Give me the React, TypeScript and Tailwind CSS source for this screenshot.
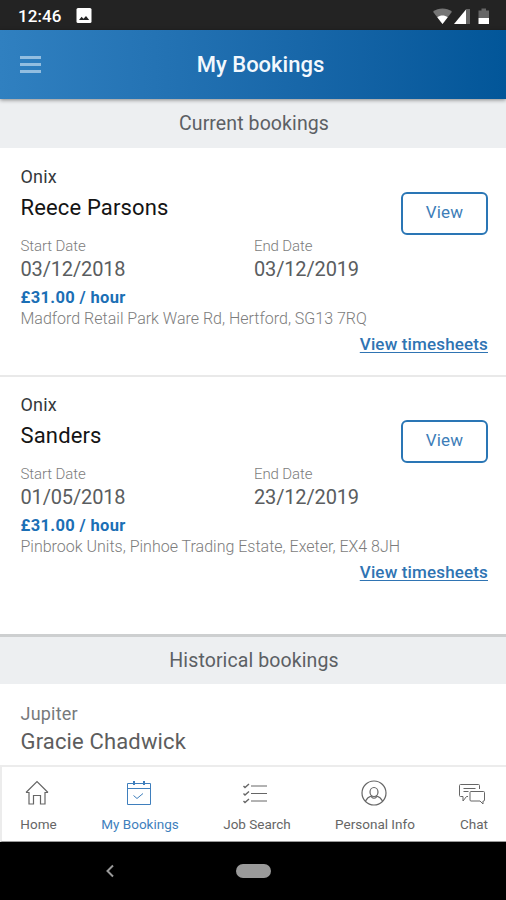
import type { ReactNode } from 'react';
import clsx from 'clsx';

interface Booking {
  client: string;
  name: string;
  startDate: string;
  endDate: string;
  rate: string;
  address: string;
}

const bookings: Booking[] = [
  {
    client: 'Onix',
    name: 'Reece Parsons',
    startDate: '03/12/2018',
    endDate: '03/12/2019',
    rate: '£31.00 / hour',
    address: 'Madford Retail Park Ware Rd, Hertford, SG13 7RQ',
  },
  {
    client: 'Onix',
    name: 'Sanders',
    startDate: '01/05/2018',
    endDate: '23/12/2019',
    rate: '£31.00 / hour',
    address: 'Pinbrook Units, Pinhoe Trading Estate, Exeter, EX4 8JH',
  },
];

const StatusBar = () => (
  <div className="flex h-[30px] shrink-0 items-center bg-[#232323] pt-0.5 pr-[15px] pl-[18px] text-white">
    <span className="text-[17px] leading-none font-medium tracking-[0.1px]">12:46</span>
    <svg className="ml-[14px] h-4 w-4" viewBox="0 0 16 16">
      <rect x="0.5" y="0" width="15" height="15" rx="1.5" fill="#fff" />
      <path d="M3 12l2.6-3.2 1.9 2L10 8l3.2 4z" fill="#232323" />
    </svg>
    <svg className="ml-auto h-[17px] w-[58px]" viewBox="0 0 58 17">
      <path d="M0 3.8C5.5-.6 13.500-.6 19 3.800L9.500 16z" fill="#757575" />
      <path d="M4.300 9.300c3-2.300 7.400-2.300 10.400 0L9.500 16z" fill="#fff" />
      <path d="M33 1h4v15h-4z" fill="#666" />
      <path d="M33 1.500V16H21z" fill="#fff" />
      <path d="M45.500 2.500h3V.5h4.500v2h3V10H45.500z" fill="#666" />
      <path d="M45.500 10H56v6H45.500z" fill="#fff" />
    </svg>
  </div>
);

const Header = () => (
  <header className="relative z-10 flex h-[69px] shrink-0 items-center bg-linear-to-r from-[#3080c0] to-[#025699] px-5 shadow-[0_1px_4px_rgba(0,0,0,0.45)]">
    <div className="flex w-[21px] flex-col gap-1">
      <span className="h-[3px] bg-[#93bee0]" />
      <span className="h-[3px] bg-[#93bee0]" />
      <span className="h-[3px] bg-[#93bee0]" />
    </div>
    <h1 className="flex-1 pr-[6px] text-center text-[22px] font-medium text-[#f3f8fd]">
      My Bookings
    </h1>
  </header>
);

const SectionTitle = ({ children, className }: { children: ReactNode; className: string }) => (
  <h2
    className={clsx(
      'flex shrink-0 items-center justify-center bg-[#edeff1] pl-[2px] text-[19.5px] tracking-[0.1px] text-[#5c6064]',
      className
    )}
  >
    {children}
  </h2>
);

const DateField = ({ label, value }: { label: string; value: string }) => (
  <div>
    <div className="h-[21px] text-[15px] leading-[21px] font-light tracking-[-0.1px] text-[#7c7c7c]">
      {label}
    </div>
    <div className="h-6 text-[20px] leading-6 tracking-[-0.15px] text-[#5a5d60]">{value}</div>
  </div>
);

const BookingCard = ({ booking }: { booking: Booking }) => (
  <article className="relative pt-[17px] pr-[21px] pl-[20.500px]">
    <div className="text-[18px] leading-6 tracking-[0.2px] text-[#34383c]">{booking.client}</div>
    <div className="pt-[2px] text-[22px] leading-[33px] tracking-[0.15px] text-[#141414]">
      {booking.name}
    </div>
    <button className="absolute top-[43.500px] right-[18px] h-[43px] w-[87px] rounded-[6px] border-2 border-[#2a76b5] text-[17px] tracking-[0.2px] text-[#3d7db8]">
      View
    </button>
    <div className="grid grid-cols-[233.500px_1fr] pt-3">
      <DateField label="Start Date" value={booking.startDate} />
      <DateField label="End Date" value={booking.endDate} />
    </div>
    <div className="pt-[5px] text-[16.5px] leading-[24px] font-bold tracking-[0.35px] text-[#1b6fb5]">
      {booking.rate}
    </div>
    <div className="-mt-px text-[16px] leading-[19px] font-light whitespace-nowrap text-[#7c7c7c]">
      {booking.address}
    </div>
    <div className="-mr-[3px] pt-[3px] text-right text-[17px] leading-[26px] font-medium tracking-[0.15px] text-[#2f74b3]">
      <a className="underline decoration-1 underline-offset-2">View timesheets</a>
    </div>
  </article>
);

const HomeIcon = () => (
  <svg className="mr-[4px] h-[26px] w-[26px]" viewBox="0 0 26 26" fill="none" stroke="currentColor">
    <path d="M2 12.500L13 1.500l11 11M2 12.500h3V24h4.500v-8.500h7V24H21V12.500h3" strokeWidth="1.200" />
  </svg>
);

const CalendarIcon = () => (
  <svg className="mr-[2px] h-[26px] w-[26px]" viewBox="0 0 26 26" fill="none" stroke="currentColor">
    <path d="M1.500 3.500h23v21h-23zM1.500 8.500h23M7.500 15.500l3.500 3 6-5" />
    <path d="M8 1v4M18 1v4" strokeWidth="2" />
  </svg>
);

const ChecklistIcon = () => (
  <svg className="mr-[4px] h-[26px] w-[26px]" viewBox="0 0 26 26" fill="none" stroke="currentColor">
    <path d="M9 6h16M9 13.500h16M9 21h16" />
    <path
      d="M1.500 6l1.500 1.500L7 4M1.500 13.500L3 15 7 11.500M1.500 21L3 22.500 7 19"
      strokeWidth="1.400"
    />
  </svg>
);

const PersonIcon = () => (
  <svg
    className="mr-[2px] h-[26px] w-[26px]"
    viewBox="0 0 26 26"
    fill="none"
    stroke="currentColor"
    strokeWidth="1.200"
  >
    <circle cx="13" cy="13" r="12" />
    <path d="M10.800 15.800c-2.900.9-5 2.500-6.300 5.200M15.200 15.800c2.900.9 5 2.500 6.300 5.200" />
    <ellipse cx="13" cy="12" rx="4" ry="4.500" />
    <path d="M10.800 15.800v1.500c1.200 1.200 3.200 1.200 4.400 0v-1.500" />
  </svg>
);

const ChatIcon = () => (
  <svg className="mr-[4px] h-[26px] w-[26px]" viewBox="0 0 26 26" fill="none" stroke="currentColor">
    <path d="M20.500 9V5.500q0-1-1-1H1.500q-1 0-1 1v10q0 1 1 1H4V21l3.500-4.500H9M4.500 8.500h12M4.500 11.500h5" />
    <path d="M12 11.500h12.500q1 0 1 1v7.500q0 1-1 1h-.5v3l-3-3h-9q-1 0-1-1v-7.500q0-1 1-1z" />
  </svg>
);

interface NavItemProps {
  label: string;
  icon: ReactNode;
  className: string;
  active?: boolean;
}

const NavItem = ({ label, icon, className, active }: NavItemProps) => (
  <div
    className={clsx(
      'flex shrink-0 flex-col items-center pt-[13px] whitespace-nowrap',
      active ? 'text-[#3f7fbd]' : 'text-[#666]',
      className
    )}
  >
    {icon}
    <span className="pt-[9px] text-[13.500px] leading-[18px]">{label}</span>
  </div>
);

const App = () => (
  <div className="flex h-[900px] w-[506px] flex-col overflow-hidden bg-white font-['Roboto',sans-serif]">
    <StatusBar />
    <Header />
    <SectionTitle className="h-[49px]">Current bookings</SectionTitle>
    <main className="flex min-h-0 flex-1 flex-col">
      <div className="h-[229px] shrink-0 border-b-2 border-[#e9e9e9]">
        <BookingCard booking={bookings[0]} />
      </div>
      <div className="-mt-px h-[258px] shrink-0">
        <BookingCard booking={bookings[1]} />
      </div>
      <div className="shrink-0 border-t-[3px] border-[#cdcfd0]">
        <SectionTitle className="h-[47px]">Historical bookings</SectionTitle>
      </div>
      <div className="px-[20.500px] pt-[17.500px]">
        <div className="text-[18px] leading-6 tracking-[0.2px] text-[#77797b]">Jupiter</div>
        <div className="text-[22px] leading-8 tracking-[0.15px] text-[#5d5d5d]">
          Gracie Chadwick
        </div>
      </div>
    </main>
    <nav className="flex h-[77px] shrink-0 border-t-2 border-b border-l-2 border-[#ececec] border-b-[#9b9b9b] bg-white">
      <NavItem label="Home" icon={<HomeIcon />} className="w-[73px]" />
      <NavItem label="My Bookings" icon={<CalendarIcon />} className="w-[130px]" active />
      <NavItem label="Job Search" icon={<ChecklistIcon />} className="w-[104px]" />
      <NavItem label="Personal Info" icon={<PersonIcon />} className="w-[132px]" />
      <NavItem label="Chat" icon={<ChatIcon />} className="w-[66px]" />
    </nav>
    <div className="flex h-[58px] shrink-0 items-center bg-black pl-[104px]">
      <svg className="h-[14px] w-[12px]" viewBox="0 0 12 14" fill="none" stroke="#9a9a9a">
        <path d="M9 1.500L3.500 7l5.500 5.500" strokeWidth="2" />
      </svg>
      <span className="ml-[120px] h-[14px] w-[35px] rounded-full bg-[#9a9a9a]" />
    </div>
  </div>
);

export default App;
